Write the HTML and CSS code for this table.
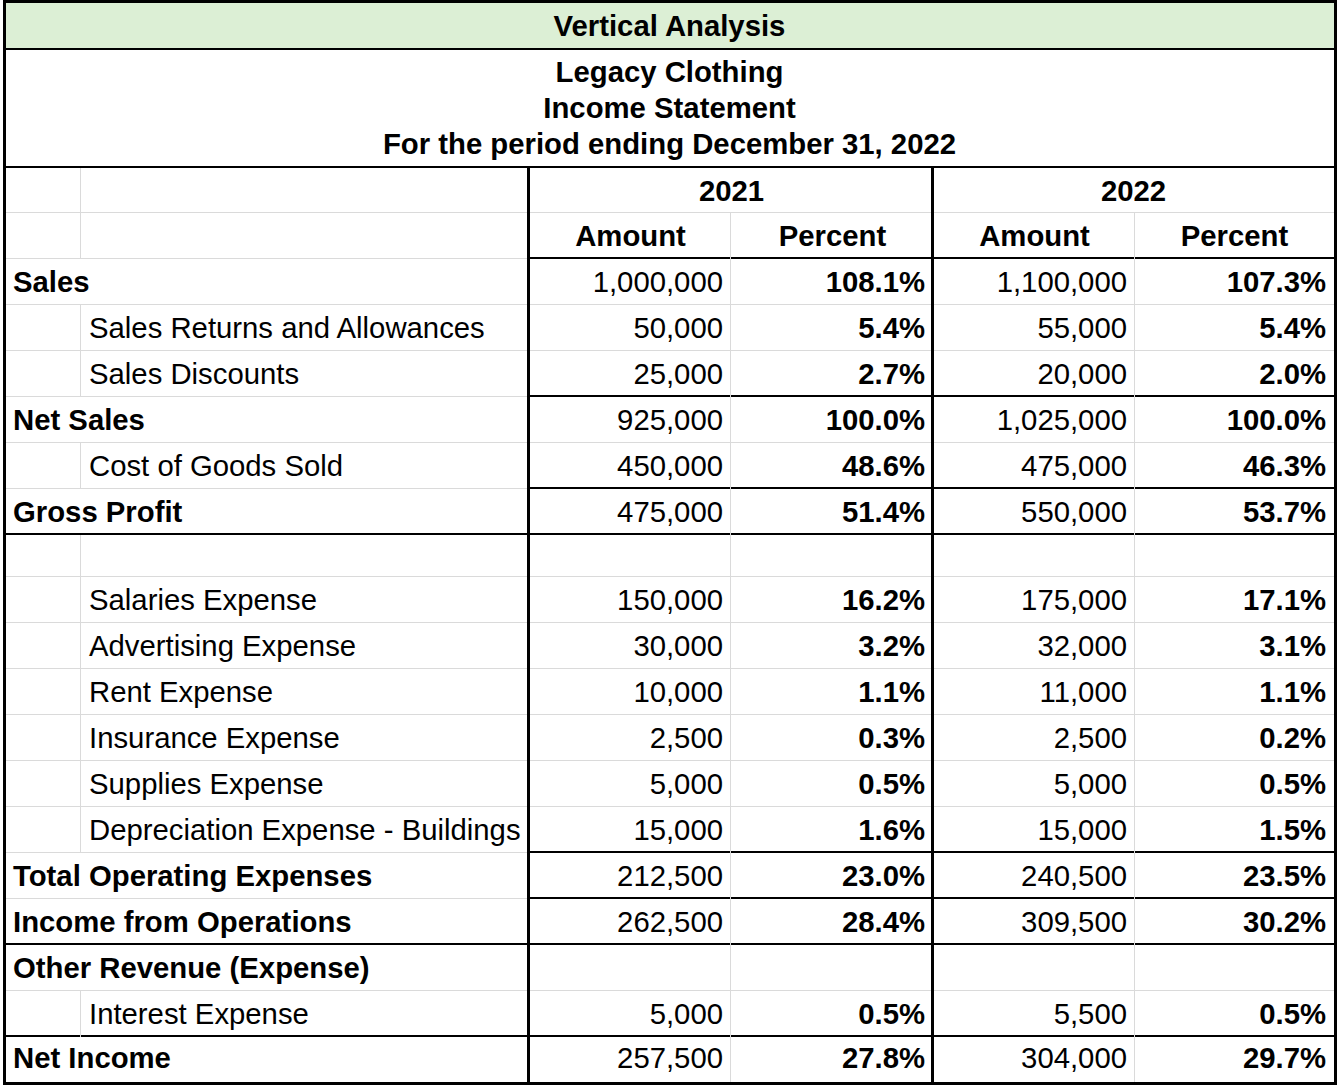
FILE: index.html
```html
<!DOCTYPE html>
<html lang="en">
<head>
<meta charset="utf-8">
<title>Vertical Analysis</title>
<link rel="stylesheet" href="styles.css">
</head>
<body>
<div class="sheet">
  <div class="row head-rule">
    <div class="c title span6">Vertical Analysis</div>
  </div>
  <div class="row head-rule">
    <div class="c heading span6">Legacy Clothing<br>Income Statement<br>For the period ending December 31, 2022</div>
  </div>
  <div class="row">
    <div class="c"></div>
    <div class="c rb"></div>
    <div class="c hd ctr span2 rb">2021</div>
    <div class="c hd ctr span2 nr">2022</div>
  </div>
  <div class="row rule">
    <div class="c"></div>
    <div class="c rb"></div>
    <div class="c hd ctr num">Amount</div>
    <div class="c hd ctr num rb">Percent</div>
    <div class="c hd ctr num">Amount</div>
    <div class="c hd ctr num nr">Percent</div>
  </div>

  <div class="row">
    <div class="c total span2 rb">Sales</div>
    <div class="c num amt">1,000,000</div><div class="c num pct rb">108.1%</div>
    <div class="c num amt">1,100,000</div><div class="c num pct nr">107.3%</div>
  </div>
  <div class="row">
    <div class="c"></div><div class="c item rb">Sales Returns and Allowances</div>
    <div class="c num amt">50,000</div><div class="c num pct rb">5.4%</div>
    <div class="c num amt">55,000</div><div class="c num pct nr">5.4%</div>
  </div>
  <div class="row rule">
    <div class="c"></div><div class="c item rb">Sales Discounts</div>
    <div class="c num amt">25,000</div><div class="c num pct rb">2.7%</div>
    <div class="c num amt">20,000</div><div class="c num pct nr">2.0%</div>
  </div>
  <div class="row">
    <div class="c total span2 rb">Net Sales</div>
    <div class="c num amt">925,000</div><div class="c num pct rb">100.0%</div>
    <div class="c num amt">1,025,000</div><div class="c num pct nr">100.0%</div>
  </div>
  <div class="row rule">
    <div class="c"></div><div class="c item rb">Cost of Goods Sold</div>
    <div class="c num amt">450,000</div><div class="c num pct rb">48.6%</div>
    <div class="c num amt">475,000</div><div class="c num pct nr">46.3%</div>
  </div>
  <div class="row rule full">
    <div class="c total span2 rb">Gross Profit</div>
    <div class="c num amt">475,000</div><div class="c num pct rb">51.4%</div>
    <div class="c num amt">550,000</div><div class="c num pct nr">53.7%</div>
  </div>
  <div class="row">
    <div class="c"></div><div class="c item rb"></div>
    <div class="c num amt"></div><div class="c num pct rb"></div>
    <div class="c num amt"></div><div class="c num pct nr"></div>
  </div>
  <div class="row">
    <div class="c"></div><div class="c item rb">Salaries Expense</div>
    <div class="c num amt">150,000</div><div class="c num pct rb">16.2%</div>
    <div class="c num amt">175,000</div><div class="c num pct nr">17.1%</div>
  </div>
  <div class="row">
    <div class="c"></div><div class="c item rb">Advertising Expense</div>
    <div class="c num amt">30,000</div><div class="c num pct rb">3.2%</div>
    <div class="c num amt">32,000</div><div class="c num pct nr">3.1%</div>
  </div>
  <div class="row">
    <div class="c"></div><div class="c item rb">Rent Expense</div>
    <div class="c num amt">10,000</div><div class="c num pct rb">1.1%</div>
    <div class="c num amt">11,000</div><div class="c num pct nr">1.1%</div>
  </div>
  <div class="row">
    <div class="c"></div><div class="c item rb">Insurance Expense</div>
    <div class="c num amt">2,500</div><div class="c num pct rb">0.3%</div>
    <div class="c num amt">2,500</div><div class="c num pct nr">0.2%</div>
  </div>
  <div class="row">
    <div class="c"></div><div class="c item rb">Supplies Expense</div>
    <div class="c num amt">5,000</div><div class="c num pct rb">0.5%</div>
    <div class="c num amt">5,000</div><div class="c num pct nr">0.5%</div>
  </div>
  <div class="row rule">
    <div class="c"></div><div class="c item rb">Depreciation Expense - Buildings</div>
    <div class="c num amt">15,000</div><div class="c num pct rb">1.6%</div>
    <div class="c num amt">15,000</div><div class="c num pct nr">1.5%</div>
  </div>
  <div class="row rule">
    <div class="c total span2 rb">Total Operating Expenses</div>
    <div class="c num amt">212,500</div><div class="c num pct rb">23.0%</div>
    <div class="c num amt">240,500</div><div class="c num pct nr">23.5%</div>
  </div>
  <div class="row rule full">
    <div class="c total span2 rb">Income from Operations</div>
    <div class="c num amt">262,500</div><div class="c num pct rb">28.4%</div>
    <div class="c num amt">309,500</div><div class="c num pct nr">30.2%</div>
  </div>
  <div class="row">
    <div class="c total span2 rb">Other Revenue (Expense)</div>
    <div class="c num amt"></div><div class="c num pct rb"></div>
    <div class="c num amt"></div><div class="c num pct nr"></div>
  </div>
  <div class="row rule full">
    <div class="c"></div><div class="c item rb">Interest Expense</div>
    <div class="c num amt">5,000</div><div class="c num pct rb">0.5%</div>
    <div class="c num amt">5,500</div><div class="c num pct nr">0.5%</div>
  </div>
  <div class="row last">
    <div class="c total span2 rb">Net Income</div>
    <div class="c num amt">257,500</div><div class="c num pct rb">27.8%</div>
    <div class="c num amt">304,000</div><div class="c num pct nr">29.7%</div>
  </div>
</div>
</body>
</html>
```

FILE: styles.css
```css
body {
  margin: 0;
  padding: 0 0 0 3px;
  background: #ffffff;
  font-family: "Liberation Sans", Arial, sans-serif;
}

.sheet {
  display: grid;
  width: 1328px;
  grid-template-columns: 75px 449px 201px 203px 201px 199px;
  grid-template-rows: 47px 118px 45px 46px repeat(6, 46px) 42px repeat(10, 46px) 45px;
  border: 3px solid #000000;
  font-size: 29.3px;
  color: #000000;
}

.row {
  display: contents;
}

.c {
  --rw: 1px;
  --rc: #dadada;
  --bw: 1px;
  --bc: #dadada;
  box-shadow: inset calc(-1 * var(--rw)) 0 0 var(--rc), inset 0 calc(-1 * var(--bw)) 0 var(--bc);
  display: flex;
  align-items: center;
  padding: 0 8px 0 7px;
  white-space: nowrap;
  overflow: hidden;
}

.span2 { grid-column: span 2; }
.span6 { grid-column: span 6; }

.rb { --rw: 3px; --rc: #000000; }
.nr { --rw: 0px; }

.head-rule .c { --bw: 2px; --bc: #000000; --rw: 0px; }
.rule .num { --bw: 2px; --bc: #000000; }
.rule.full .c { --bw: 2px; --bc: #000000; }
.last .c { --bw: 0px; padding-bottom: 3px; }

.title {
  background: #dcefd5;
  justify-content: center;
  font-weight: bold;
  padding-bottom: 2px;
}

.heading {
  flex-direction: column;
  justify-content: center;
  text-align: center;
  font-weight: bold;
  line-height: 36px;
  padding-bottom: 2px;
}

.hd { font-weight: bold; }
.ctr { justify-content: center; }

.total { font-weight: bold; }
.item { padding-left: 8px; }

.num { justify-content: flex-end; }
.num.ctr { justify-content: center; padding-left: 0; padding-right: 0; }
.pct { font-weight: bold; }
.pct.rb { padding-right: 9px; }
```
